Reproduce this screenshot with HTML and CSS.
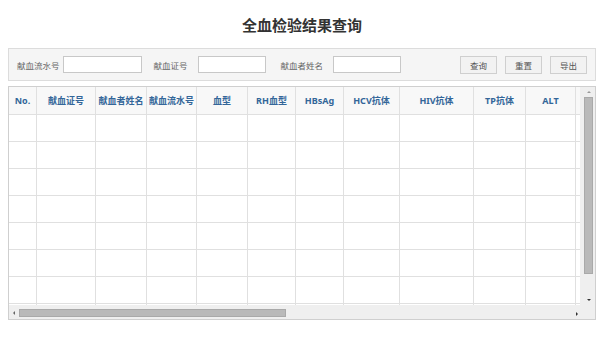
FILE: index.html
```html
<!DOCTYPE html>
<html lang="zh-CN">
<head>
  <meta charset="UTF-8" />
  <title>全血检验结果查询</title>
  <link rel="stylesheet" href="styles.css">
</head>
<body>
  <h1 class="page-title">全血检验结果查询</h1>

  <form class="search-bar" id="searchForm">
    <label class="field-label" for="serial_no">献血流水号</label>
    <input class="field-input wide" type="text" id="serial_no">

    <label class="field-label gap" for="cert_no">献血证号</label>
    <input class="field-input" type="text" id="cert_no">

    <label class="field-label gap wide-gap" for="donor_name">献血者姓名</label>
    <input class="field-input" type="text" id="donor_name">

    <div class="actions">
      <button type="submit" class="btn">查询</button>
      <button type="reset" class="btn">重置</button>
      <button type="button" class="btn">导出</button>
    </div>
  </form>

  <div class="grid-wrap">
    <div class="grid-view">
      <table class="grid">
        <colgroup>
          <col style="width:28px">
          <col style="width:59px">
          <col style="width:51px">
          <col style="width:50px">
          <col style="width:51px">
          <col style="width:48px">
          <col style="width:48px">
          <col style="width:56px">
          <col style="width:74px">
          <col style="width:52px">
          <col style="width:50px">
          <col style="width:76px">
          <col style="width:76px">
          <col style="width:76px">
          <col style="width:76px">
          <col style="width:76px">
          <col style="width:76px">
          <col style="width:76px">
          <col style="width:76px">
        </colgroup>
        <thead>
          <tr>
            <th>No.</th>
            <th>献血证号</th>
            <th>献血者姓名</th>
            <th>献血流水号</th>
            <th>血型</th>
            <th>RH血型</th>
            <th>HBsAg</th>
            <th>HCV抗体</th>
            <th>HIV抗体</th>
            <th>TP抗体</th>
            <th>ALT</th>
            <th></th>
            <th></th>
            <th></th>
            <th></th>
            <th></th>
            <th></th>
            <th></th>
            <th></th>
          </tr>
        </thead>
        <tbody id="rows"></tbody>
      </table>
    </div>

    <div class="vbar">
      <span class="arrow up"></span>
      <div class="track">
        <div class="thumb"></div>
      </div>
      <span class="arrow down"></span>
    </div>

    <div class="hbar">
      <span class="arrow left"></span>
      <div class="track">
        <div class="thumb"></div>
      </div>
      <span class="arrow right"></span>
    </div>

    <div class="corner"></div>
  </div>

  <script>
    // 空白行占位
    const tbody = document.getElementById("rows");
    for (let i = 0; i < 8; i++) {
      const tr = document.createElement("tr");
      for (let j = 0; j < 19; j++) {
        tr.appendChild(document.createElement("td"));
      }
      tbody.appendChild(tr);
    }

    document.getElementById("searchForm").addEventListener("submit", function(e) {
      e.preventDefault();
    });
  </script>
</body>
</html>
```

FILE: styles.css
```css
* {
  box-sizing: border-box;
}

body {
  margin: 8px;
  font-family: "Noto Sans", "Noto Sans CJK SC", sans-serif;
  color: #333;
  background: #fff;
}

.page-title {
  margin: 0 0 13px;
  padding-top: 7px;
  line-height: 20px;
  font-size: 15px;
  font-weight: bold;
  text-align: center;
  color: #333;
}

.search-bar {
  display: flex;
  align-items: center;
  height: 33px;
  padding: 0 8px 0 8px;
  background-color: #f5f5f5;
  border: 1px solid #dcdcdc;
}

.field-label {
  font-size: 8.5px;
  color: #666;
  margin-right: 3px;
}

.field-label.gap {
  margin-left: 12px;
  margin-right: 10px;
}

.field-label.wide-gap {
  margin-left: 15px;
}

.field-input {
  width: 68px;
  height: 17px;
  padding: 0 3px;
  border: 1px solid #c8c8c8;
  background: #fff;
  font-size: 9px;
}

.field-input.wide {
  width: 79px;
}

.actions {
  display: flex;
  margin-left: auto;
  gap: 8px;
}

.btn {
  width: 37px;
  height: 18px;
  padding: 0;
  font-family: inherit;
  font-size: 8.5px;
  color: #555;
  background-color: #f2f2f2;
  border: 1px solid #cfcfcf;
  cursor: pointer;
}

.btn:hover {
  background-color: #e6e6e6;
}

/* 表格 + 自绘滚动条 */
.grid-wrap {
  margin-top: 5px;
  height: 234px;
  display: grid;
  grid-template-columns: 1fr 15px;
  grid-template-rows: 1fr 14px;
  border: 1px solid #cfcfcf;
}

.grid-view {
  overflow: hidden;
}

.grid {
  table-layout: fixed;
  width: 1175px;
  border-collapse: separate;
  border-spacing: 0;
}

.grid th,
.grid td {
  padding: 0;
  border-right: 1px solid #e0e0e0;
  border-bottom: 1px solid #e0e0e0;
}

.grid th {
  height: 28px;
  font-size: 9px;
  font-weight: bold;
  color: #336699;
  background-color: #f8f8f8;
  text-align: center;
  white-space: nowrap;
}

.grid td {
  height: 27px;
}

.vbar,
.hbar,
.corner {
  background-color: #efefef;
}

.vbar {
  display: flex;
  flex-direction: column;
  align-items: center;
  padding-left: 2px;
}

.vbar .track {
  flex: 1;
  width: 9px;
}

.vbar .thumb {
  height: 177px;
  background-color: #b9b9b9;
  border: 1px solid #a9a9a9;
}

.hbar {
  display: flex;
  align-items: center;
  padding-top: 1px;
}

.hbar .track {
  flex: 1;
  height: 8px;
}

.hbar .thumb {
  width: 267px;
  height: 8px;
  background-color: #b9b9b9;
  border: 1px solid #a9a9a9;
}

.arrow {
  display: block;
  width: 0;
  height: 0;
  border: 0 solid transparent;
}

.arrow.up {
  margin: 4px 0 4px;
  border-width: 0 2px 2px;
  border-bottom-color: #999;
}

.arrow.down {
  margin: 11px 0 4px;
  border-width: 2px 2px 0;
  border-top-color: #333;
}

.arrow.left {
  margin: 0 4px 0 4px;
  border-width: 2px 2px 2px 0;
  border-right-color: #666;
}

.arrow.right {
  margin: 2px 2px 0 8px;
  border-width: 2px 0 2px 2px;
  border-left-color: #333;
}
```
